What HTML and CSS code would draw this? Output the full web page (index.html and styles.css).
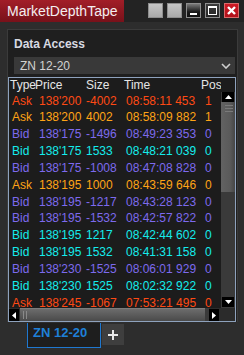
FILE: index.html
```html
<!DOCTYPE html>
<html lang="en">

<head>
    <meta charset="UTF-8">
    <meta name="viewport" content="width=device-width, initial-scale=1.0">
    <title>MarketDepthTape</title>
    <link rel="stylesheet" href="styles.css">
</head>

<body>
    <div class="title_bar">
        <div class="title">MarketDepthTape</div>
        <div class="window_buttons">
            <span class="win_btn plain"></span>
            <span class="win_btn plain"></span>
            <span class="win_btn minimize">
                <svg width="13" height="13" viewBox="0 0 13 13"><rect x="3" y="9" width="7" height="2" fill="#fff"/></svg>
            </span>
            <span class="win_btn maximize">
                <svg width="13" height="13" viewBox="0 0 13 13"><rect x="2.5" y="2.5" width="8" height="8" fill="none" stroke="#fff"/><rect x="2" y="2" width="9" height="2" fill="#fff"/></svg>
            </span>
            <span class="win_btn close">
                <svg width="13" height="13" viewBox="0 0 13 13"><path d="M3 3 L10 10 M10 3 L3 10" stroke="#fff" stroke-width="2.4"/></svg>
            </span>
        </div>
    </div>

    <div class="panel">
        <div class="panel_title">Data Access</div>
        <div class="select">
            <span>ZN 12-20</span>
            <svg width="10" height="6" viewBox="0 0 10 6"><path d="M1 1 L5 5 L9 1" fill="none" stroke="#cfcfcf" stroke-width="1.6"/></svg>
        </div>

        <div class="tape">
            <div class="tape_head">
                <span>Type</span><span>Price</span><span>Size</span><span>Time</span><span>Pos</span>
            </div>
            <div class="tape_body">
                <div class="row ask_neg"><span>Ask</span><span>138'200</span><span>-4002</span><span>08:58:11 453</span><span>1</span></div>
                <div class="row ask_pos"><span>Ask</span><span>138'200</span><span>4002</span><span>08:58:09 882</span><span>1</span></div>
                <div class="row bid_neg"><span>Bid</span><span>138'175</span><span>-1496</span><span>08:49:23 353</span><span>0</span></div>
                <div class="row bid_pos"><span>Bid</span><span>138'175</span><span>1533</span><span>08:48:21 039</span><span>0</span></div>
                <div class="row bid_neg"><span>Bid</span><span>138'175</span><span>-1008</span><span>08:47:08 828</span><span>0</span></div>
                <div class="row ask_pos"><span>Ask</span><span>138'195</span><span>1000</span><span>08:43:59 646</span><span>0</span></div>
                <div class="row bid_neg"><span>Bid</span><span>138'195</span><span>-1217</span><span>08:43:28 123</span><span>0</span></div>
                <div class="row bid_neg"><span>Bid</span><span>138'195</span><span>-1532</span><span>08:42:57 822</span><span>0</span></div>
                <div class="row bid_pos"><span>Bid</span><span>138'195</span><span>1217</span><span>08:42:44 602</span><span>0</span></div>
                <div class="row bid_pos"><span>Bid</span><span>138'195</span><span>1532</span><span>08:41:31 158</span><span>0</span></div>
                <div class="row bid_neg"><span>Bid</span><span>138'230</span><span>-1525</span><span>08:06:01 929</span><span>0</span></div>
                <div class="row bid_pos"><span>Bid</span><span>138'230</span><span>1525</span><span>08:02:32 922</span><span>0</span></div>
                <div class="row ask_neg"><span>Ask</span><span>138'245</span><span>-1067</span><span>07:53:21 495</span><span>0</span></div>
            </div>
            <div class="vscroll">
                <span class="arrow">
                    <svg width="7" height="4" viewBox="0 0 7 4"><path d="M0 4 L3.5 0 L7 4 Z" fill="#fff"/></svg>
                </span>
                <span class="v_thumb"><i></i><i></i><i></i></span>
                <span class="v_track"></span>
                <span class="arrow">
                    <svg width="7" height="4" viewBox="0 0 7 4"><path d="M0 0 L3.5 4 L7 0 Z" fill="#fff"/></svg>
                </span>
            </div>
            <div class="hscroll">
                <span class="arrow">
                    <svg width="4" height="7" viewBox="0 0 4 7"><path d="M4 0 L0 3.5 L4 7 Z" fill="#fff"/></svg>
                </span>
                <span class="h_track"><span class="h_thumb"><i></i><i></i></span></span>
                <span class="arrow">
                    <svg width="4" height="7" viewBox="0 0 4 7"><path d="M0 0 L4 3.5 L0 7 Z" fill="#fff"/></svg>
                </span>
            </div>
            <div class="corner"></div>
        </div>
    </div>

    <div class="tab_strip">
        <div class="tab active">ZN 12-20</div>
        <div class="tab_add">
            <svg width="10" height="10" viewBox="0 0 10 10"><path d="M5 0 V10 M0 5 H10" stroke="#e8e8e8" stroke-width="2"/></svg>
        </div>
    </div>
</body>

</html>
```

FILE: styles.css
```css
* {
    box-sizing: border-box;
}

body {
    margin: 0;
    width: 244px;
    height: 355px;
    overflow: hidden;
    background-color: #2d2d2d;
    font-family: "Liberation Sans", Arial, sans-serif;
}

/* 标题栏 */
.title_bar {
    display: flex;
    justify-content: space-between;
    height: 22px;
    background-color: #232323;
}

.title {
    width: 124px;
    padding: 1px 0 0 7px;
    line-height: 21px;
    font-size: 14px;
    color: #f4eef0;
    background: linear-gradient(#a21e28, #78111a);
}

.window_buttons {
    display: flex;
    gap: 4px;
    padding: 3px 5px 0 0;
}

.win_btn {
    display: flex;
    align-items: center;
    justify-content: center;
    width: 15px;
    height: 15px;
    border: 1px solid #8e8e8e;
}

.win_btn.plain {
    background: linear-gradient(#c6c6c6, #a9a9a9);
}

.win_btn.minimize {
    background: linear-gradient(#7a7a7a, #1a1a1a 60%, #111);
}

.win_btn.maximize {
    background: linear-gradient(#3c3c3c, #262626);
}

.win_btn.close {
    border-color: #d86a6a;
    background: linear-gradient(#d01a24, #b0101a);
}

/* 面板 */
.panel {
    margin: 7px 6px 0 7px;
    border: 1px solid #3b3b3b;
    border-bottom: none;
    background-color: #1f1f1f;
}

.panel_title {
    padding: 7px 0 0 6px;
    line-height: 14px;
    font-size: 12px;
    font-weight: bold;
    color: #d8dae2;
}

.select {
    display: flex;
    align-items: center;
    justify-content: space-between;
    height: 17px;
    margin: 6px 2px 0 6px;
    padding: 1px 4px 0 6px;
    line-height: 16px;
    font-size: 12px;
    color: #d2d2d2;
    background-color: #393939;
}

/* 成交列表 */
.tape {
    display: grid;
    grid-template-columns: 212px 14px;
    grid-template-rows: 14px 216px 13px;
    margin: 3px 1px 0 0;
    border: 1px solid #8ea2bd;
    background-color: #1c1c1c;
    font-size: 12px;
}

.tape_head,
.row {
    display: grid;
    white-space: nowrap;
}

.tape_head {
    grid-row: 1;
    grid-column: 1;
    grid-template-columns: 25px 51px 38px 77px 1fr;
    padding-left: 1px;
    overflow: hidden;
    line-height: 14px;
    color: #e6e6e6;
}

.tape_body {
    grid-row: 2;
    grid-column: 1;
    overflow: hidden;
    padding-top: 0.5px;
}

.row {
    grid-template-columns: 27px 47px 40px 79px 1fr;
    padding-left: 3px;
    line-height: 16.85px;
}

.ask_neg {
    color: #ff4a14;
}

.ask_pos {
    color: #ffa416;
}

.bid_neg {
    color: #7d6aee;
}

.bid_pos {
    color: #14ecec;
}

.arrow {
    display: flex;
    align-items: center;
    justify-content: center;
    background-color: #000;
}

.vscroll {
    grid-row: 2;
    grid-column: 2;
    display: flex;
    flex-direction: column;
    background-color: #3a3a3a;
}

.vscroll .arrow {
    height: 10px;
    margin: 0 1px;
}

.vscroll .arrow:last-child {
    margin-bottom: 1px;
}

.v_thumb {
    display: flex;
    flex-direction: column;
    gap: 2px;
    height: 90px;
    padding: 3px 2px 0 4px;
    background: linear-gradient(to right, #626262, #5a5a5a 65%, #464646);
}

.v_thumb i {
    height: 1px;
    background-color: #7a7a7a;
}

.v_track {
    flex: 1;
}

.hscroll {
    grid-row: 3;
    grid-column: 1;
    display: flex;
    padding-right: 2px;
    background-color: #2b2b2b;
}

.hscroll .arrow {
    width: 10px;
    height: 12px;
    margin-top: 1px;
}

.h_track {
    flex: 1;
    margin-left: 1px;
    background-color: #3a3a3a;
}

.h_thumb {
    display: flex;
    gap: 2px;
    width: 185px;
    height: 13px;
    padding: 2px 0 2px 3px;
    border-top: 1px solid #7c7c7c;
    background: linear-gradient(#6c6c6c, #4a4a4a);
}

.h_thumb i {
    width: 1px;
    background-color: #8a8a8a;
}

.corner {
    grid-row: 3;
    grid-column: 2;
    background-color: #2b2b2b;
}

/* 标签栏 */
.tab_strip {
    display: flex;
    gap: 1px;
    margin-top: 1px;
    padding-left: 27px;
}

.tab {
    width: 74px;
    height: 25px;
    padding-left: 5px;
    line-height: 20px;
    font-size: 13px;
    font-weight: bold;
    color: #1f80d8;
    background-color: #1e1e1e;
    border: 1px solid #1f78d0;
    border-top: none;
}

.tab_add {
    display: flex;
    align-items: center;
    justify-content: center;
    width: 22px;
    height: 21px;
    margin-top: 1px;
    background-color: #3e3e3e;
}
```
